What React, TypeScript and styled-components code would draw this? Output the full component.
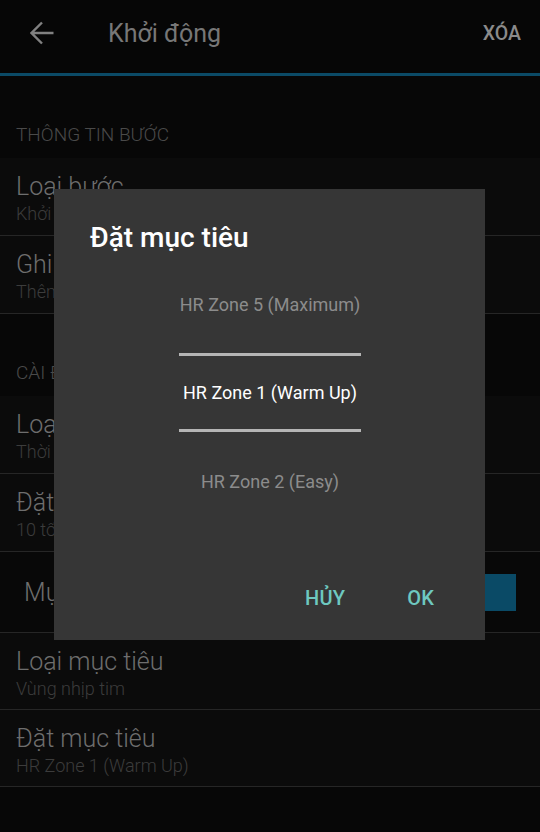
import React from "react";
import styled, { createGlobalStyle } from "styled-components";

const GlobalStyle = createGlobalStyle`
  html, body {
    margin: 0;
    padding: 0;
    background: #070707;
    font-family: Roboto, "Noto Sans", sans-serif;
  }
`;

const Page = styled.div`
  width: 540px;
  height: 832px;
  background: #070707;
  overflow: hidden;
  position: relative;
`;

const Toolbar = styled.header`
  height: 73px;
  display: flex;
  align-items: center;
  background: #060606;
  border-bottom: 3px solid #0b4a66;
  padding: 0 19px 0 30px;
`;

const BackButton = styled.div`
  width: 24px;
  height: 24px;
  display: flex;
  align-items: center;
  justify-content: center;
  margin-bottom: 8px;
`;

const ToolbarTitle = styled.h1`
  flex: 1;
  margin: 0 0 0 54px;
  font-size: 25px;
  font-weight: 400;
  color: #777;
  padding-bottom: 7px;
`;

const ToolbarAction = styled.span`
  font-size: 19.5px;
  font-weight: 500;
  color: #8a8a8a;
  padding-bottom: 7px;
`;

const SectionHeader = styled.div`
  height: 82px;
  box-sizing: border-box;
  padding: 47px 16px 0;
  font-size: 19px;
  font-weight: 300;
  color: #4a4a4a;
  text-transform: uppercase;
`;

const Row = styled.div<{ $compact?: boolean }>`
  height: ${(p) => (p.$compact ? "77px" : "78px")};
  box-sizing: border-box;
  background: #0b0b0b;
  border-bottom: 1px solid #262626;
  padding: 15px 16px 0;
  display: flex;
  flex-direction: column;
  gap: 1px;
`;

const RowTitle = styled.div`
  font-size: 25px;
  font-weight: 300;
  color: #6e6e6e;
  line-height: 28px;
  white-space: nowrap;
`;

const RowSubtitle = styled.div`
  font-size: 18px;
  font-weight: 300;
  color: #3c3c3c;
  line-height: 24px;
  white-space: nowrap;
`;

const SwitchRow = styled.div`
  height: 81px;
  box-sizing: border-box;
  background: #080808;
  border-bottom: 1px solid #262626;
  padding: 0 24px;
  display: flex;
  align-items: center;
  justify-content: space-between;
`;

const SwitchLabel = styled.div`
  font-size: 25px;
  font-weight: 300;
  color: #6e6e6e;
`;

const SwitchThumb = styled.div`
  width: 31px;
  height: 37px;
  background: #0a4a66;
`;

const Dialog = styled.div`
  position: absolute;
  left: 54px;
  top: 189px;
  width: 431px;
  height: 451px;
  background: #363636;
  box-sizing: border-box;
  padding: 32px 0 0;
  display: flex;
  flex-direction: column;
`;

const DialogTitle = styled.h2`
  margin: 0 0 0 36px;
  font-size: 28px;
  font-weight: 500;
  color: #ffffff;
  line-height: 34px;
`;

const Picker = styled.div`
  width: 182px;
  margin: 0 0 0 125px;
  display: flex;
  flex-direction: column;
`;

const PickerItem = styled.div<{ $selected?: boolean }>`
  height: 73px;
  display: flex;
  align-items: center;
  justify-content: center;
  font-size: 18px;
  color: ${(p) => (p.$selected ? "#ffffff" : "#8c8c8c")};
  white-space: nowrap;
`;

const PickerEdge = styled(PickerItem)`
  height: 98px;
`;

const PickerDivider = styled.div`
  height: 3px;
  background: #b5b5b5;
`;

const Actions = styled.div`
  margin-top: auto;
  height: 84px;
  display: flex;
  justify-content: flex-end;
  align-items: center;
  gap: 62px;
  padding: 0 51px 0 0;
`;

const ActionButton = styled.span`
  font-size: 20px;
  font-weight: 500;
  color: #6ec8c0;
  letter-spacing: 0.2px;
`;

function BackArrow() {
  return (
    <svg width="24" height="24" viewBox="0 0 24 24">
      <path
        d="M23.5 12H1.5M12 1.5L1.5 12 12 22.5"
        stroke="#808080"
        strokeWidth="2.4"
        fill="none"
      />
    </svg>
  );
}

export default function App() {
  return (
    <Page>
      <GlobalStyle />
      <Toolbar>
        <BackButton>
          <BackArrow />
        </BackButton>
        <ToolbarTitle>Khởi động</ToolbarTitle>
        <ToolbarAction>XÓA</ToolbarAction>
      </Toolbar>

      <SectionHeader>Thông tin bước</SectionHeader>
      <Row>
        <RowTitle>Loại bước</RowTitle>
        <RowSubtitle>Khởi động</RowSubtitle>
      </Row>
      <Row>
        <RowTitle>Ghi chú</RowTitle>
        <RowSubtitle>Thêm ghi chú</RowSubtitle>
      </Row>

      <SectionHeader>Cài đặt thời lượng</SectionHeader>
      <Row>
        <RowTitle>Loại thời lượng</RowTitle>
        <RowSubtitle>Thời gian</RowSubtitle>
      </Row>
      <Row>
        <RowTitle>Đặt thời lượng</RowTitle>
        <RowSubtitle>10 tối thiểu</RowSubtitle>
      </Row>
      <SwitchRow>
        <SwitchLabel>Mục tiêu</SwitchLabel>
        <SwitchThumb />
      </SwitchRow>
      <Row $compact>
        <RowTitle>Loại mục tiêu</RowTitle>
        <RowSubtitle>Vùng nhịp tim</RowSubtitle>
      </Row>
      <Row $compact>
        <RowTitle>Đặt mục tiêu</RowTitle>
        <RowSubtitle>HR Zone 1 (Warm Up)</RowSubtitle>
      </Row>

      <Dialog>
        <DialogTitle>Đặt mục tiêu</DialogTitle>
        <Picker>
          <PickerEdge>HR Zone 5 (Maximum)</PickerEdge>
          <PickerDivider />
          <PickerItem $selected>HR Zone 1 (Warm Up)</PickerItem>
          <PickerDivider />
          <PickerEdge>HR Zone 2 (Easy)</PickerEdge>
        </Picker>
        <Actions>
          <ActionButton>HỦY</ActionButton>
          <ActionButton>OK</ActionButton>
        </Actions>
      </Dialog>
    </Page>
  );
}
